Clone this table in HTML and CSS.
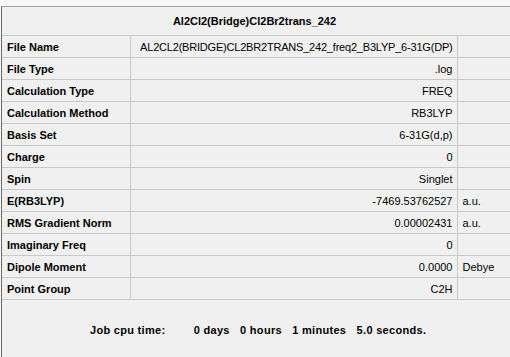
FILE: index.html
```html
<!DOCTYPE html>
<html lang="en">
<head>
  <meta charset="UTF-8">
  <meta name="viewport" content="width=device-width, initial-scale=1.0">
  <title>Summary</title>
  <link rel="stylesheet" href="styles.css">
</head>
<body>
  <div class="panel">
    <table class="summary">
      <colgroup>
        <col class="colLabel">
        <col class="colValue">
        <col class="colUnit">
      </colgroup>
      <tr>
        <th class="title" colspan="3">Al2Cl2(Bridge)Cl2Br2trans_242</th>
      </tr>
      <tr><td class="label">File Name</td><td class="value fileName">AL2CL2(BRIDGE)CL2BR2TRANS_242_freq2_B3LYP_6-31G(DP)</td><td class="unit"></td></tr>
      <tr><td class="label">File Type</td><td class="value">.log</td><td class="unit"></td></tr>
      <tr><td class="label">Calculation Type</td><td class="value">FREQ</td><td class="unit"></td></tr>
      <tr><td class="label">Calculation Method</td><td class="value">RB3LYP</td><td class="unit"></td></tr>
      <tr><td class="label">Basis Set</td><td class="value">6-31G(d,p)</td><td class="unit"></td></tr>
      <tr><td class="label">Charge</td><td class="value">0</td><td class="unit"></td></tr>
      <tr><td class="label">Spin</td><td class="value">Singlet</td><td class="unit"></td></tr>
      <tr><td class="label">E(RB3LYP)</td><td class="value">-7469.53762527</td><td class="unit">a.u.</td></tr>
      <tr><td class="label">RMS Gradient Norm</td><td class="value">0.00002431</td><td class="unit">a.u.</td></tr>
      <tr><td class="label">Imaginary Freq</td><td class="value">0</td><td class="unit"></td></tr>
      <tr><td class="label">Dipole Moment</td><td class="value">0.0000</td><td class="unit">Debye</td></tr>
      <tr><td class="label">Point Group</td><td class="value">C2H</td><td class="unit"></td></tr>
      <tr>
        <td class="footer" colspan="3">
          <span class="cpuLabel">Job cpu time:</span>
          <span class="cpuPart first">0 days</span>
          <span class="cpuPart">0 hours</span>
          <span class="cpuPart">1 minutes</span>
          <span class="cpuPart">5.0 seconds.</span>
        </td>
      </tr>
    </table>
  </div>
</body>
</html>
```

FILE: styles.css
```css
body{
  margin: 0;
  background-color: rgb(249, 249, 249);
  font-family: "Liberation Sans", Arial, sans-serif;
  font-size: 11px;
  color: black;
}
.panel{
  margin-top: 6px;
  margin-left: 1px;
  border-top: 1px solid rgb(160, 160, 160);
  border-left: 1px solid rgb(105, 105, 105);
  background-color: rgb(240, 240, 240);
  height: 350px;
}
.summary{
  border-collapse: collapse;
  width: 509px;
  table-layout: fixed;
}
.colLabel{
  width: 128px;
}
.colValue{
  width: 327px;
}
.summary td, .summary th{
  padding: 0 4px 0 5px;
  border-bottom: 1px solid rgb(200, 200, 200);
  height: 21px;
  white-space: nowrap;
  overflow: hidden;
}
.title{
  height: 28px !important;
  font-weight: bold;
  text-align: center;
  padding-left: 0 !important;
}
.label{
  font-weight: bold;
  border-right: 1px solid rgb(200, 200, 200);
}
.value{
  text-align: right;
  border-right: 1px solid rgb(200, 200, 200);
}
.fileName{
  letter-spacing: -0.2px;
}
.unit{
  text-align: left;
}
.footer{
  height: 55px !important;
  font-weight: bold;
  padding: 2px 0 0 88px !important;
  letter-spacing: 0.3px;
  font-size: 0;
}
.cpuLabel, .cpuPart{
  font-size: 11px;
  display: inline-block;
}
.cpuPart{
  margin-left: 10px;
}
.cpuPart.first{
  margin-left: 28px;
}
```
